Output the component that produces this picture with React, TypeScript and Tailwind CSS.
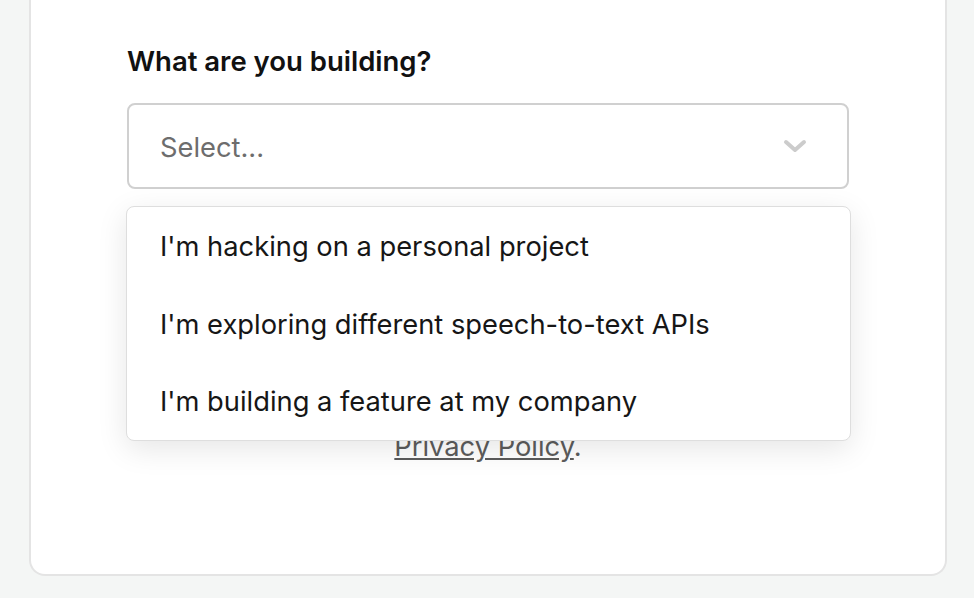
import React from "react";

const options = [
  "I'm hacking on a personal project",
  "I'm exploring different speech-to-text APIs",
  "I'm building a feature at my company",
];

const App: React.FC = () => {
  return (
    <div
      className="min-h-[598px] bg-[#f4f6f5] pl-[29px] pr-[27px] pb-[20px]"
      style={{ fontFamily: "Inter, 'Noto Sans', sans-serif" }}
    >
      {/* Card */}
      <div className="bg-white border-2 border-t-0 border-[#e4e4e4] rounded-b-[16px] pt-[45px] pb-[109px] px-[96px]">
        <h2 className="text-[27.5px] leading-[32px] font-semibold text-[#111]">
          What are you building?
        </h2>

        {/* Select */}
        <div className="relative mt-[26px]">
          <button className="w-full h-[86px] flex items-center justify-between border-2 border-[#d0d0d0] rounded-[8px] pl-[31px] pr-[40px] pt-[4px] bg-white">
            <span className="text-[27.3px] text-[#6d6d6d]">Select...</span>
            <svg width="24" height="16" viewBox="0 0 24 16" fill="none" className="-mt-[4px]">
              <path
                d="M3 4l9 8 9-8"
                stroke="#cccccc"
                strokeWidth="4"
                strokeLinecap="round"
                strokeLinejoin="round"
              />
            </svg>
          </button>

          {/* Menu */}
          <ul className="absolute z-10 left-[-1px] right-[-2px] top-[calc(100%+17px)] bg-white border border-[#dedede] rounded-[8px] shadow-[0_8px_30px_rgba(0,0,0,0.1)]">
            {options.map((o) => (
              <li
                key={o}
                className="h-[77.5px] flex items-center pl-[33px] pt-[4px] text-[27.3px] text-[#161616]"
              >
                {o}
              </li>
            ))}
          </ul>
        </div>

        {/* Content under the menu */}
        <div className="mt-[40px] flex flex-col items-center gap-[48px]">
          <button className="w-full h-[80px] rounded-[8px] bg-[#13ef93] text-[26px] font-semibold text-[#111]">
            Continue
          </button>
          <p className="text-center text-[27.3px] leading-[36px] text-[#5c5c5c]">
            By continuing, you agree to our
            <br />
            <a href="#" className="underline">
              Terms of Service
            </a>{" "}
            and
            <br />
            <a href="#" className="underline">
              Privacy Policy
            </a>
            .
          </p>
        </div>
      </div>
    </div>
  );
};

export default App;
